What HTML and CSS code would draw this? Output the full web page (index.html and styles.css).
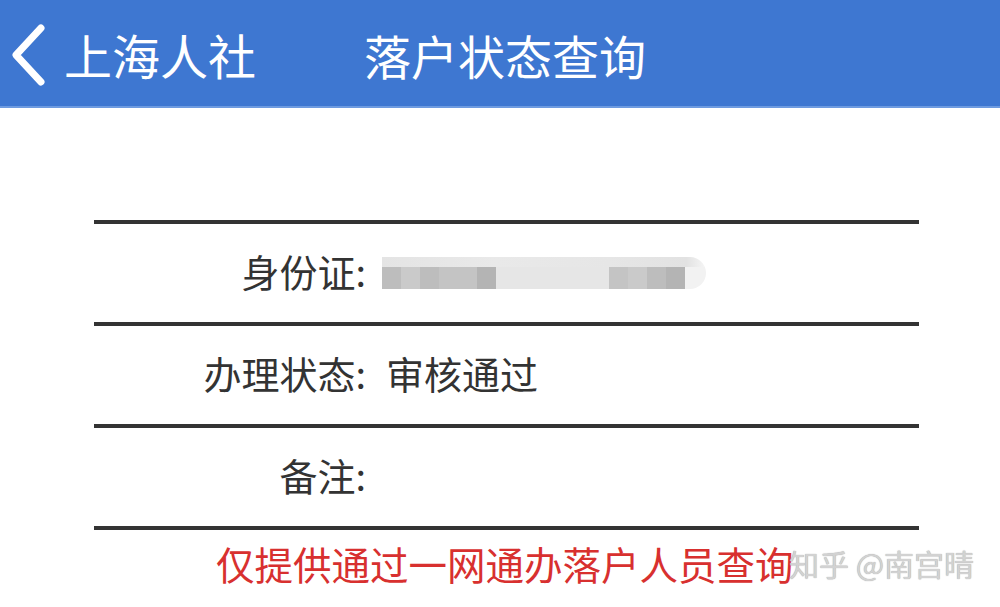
FILE: index.html
```html
<!DOCTYPE html>
<html>
<head>
  <meta charset="UTF-8">
  <title>落户状态查询</title>
  <link rel="stylesheet" href="styles.css">
</head>
<body>
  <header class="topbar">
    <a href="#" class="back">
      <svg width="40" height="64" viewBox="0 0 40 64">
        <path d="M30 5 L5 32 L30 59" fill="none" stroke="#FFFFFF" stroke-width="7" stroke-linecap="round" stroke-linejoin="round"/>
      </svg>
      <span class="back-text">上海人社</span>
    </a>
    <h1 class="title">落户状态查询</h1>
  </header>

  <div class="container">
    <div class="info">
      <div class="row">
        <span class="label">身份证:</span>
        <span class="mask">
          <span class="top"></span>
          <span class="bottom">
            <i class="s3"></i><i class="s1"></i><i class="s3"></i><i class="s2"></i><i class="s2"></i><i class="s4"></i>
            <i class="light wide"></i>
            <i class="s2"></i><i class="s1"></i><i class="s3"></i><i class="s4"></i>
          </span>
        </span>
      </div>
      <div class="row">
        <span class="label">办理状态:</span>
        <span class="value">审核通过</span>
      </div>
      <div class="row">
        <span class="label">备注:</span>
        <span class="value"></span>
      </div>
    </div>
    <p class="notice">仅提供通过一网通办落户人员查询</p>
  </div>

  <div class="watermark">知乎 @南宫晴</div>
</body>
</html>
```

FILE: styles.css
```css
body {
  margin: 0;
  font-family: "Noto Sans CJK SC", "Noto Sans", sans-serif;
  background-color: #FFFFFF;
  color: #333333;
}

.topbar {
  height: 108px;
  background-color: #3E77D1;
  display: flex;
  align-items: center;
  box-shadow: inset 0 -2px 0 #6E9BE0;
}

.back {
  display: flex;
  align-items: center;
  margin-left: 11px;
  color: #FFFFFF;
  text-decoration: none;
}

.back svg {
  display: block;
  margin-top: 2px;
}

.back-text {
  margin-left: 13px;
  font-size: 48px;
  line-height: 1;
}

.title {
  margin: 0 0 0 108px;
  font-size: 47px;
  font-weight: normal;
  line-height: 1;
  color: #FFFFFF;
}

.container {
  padding-top: 112px;
}

.info {
  margin-left: 94px;
  width: 825px;
  border-bottom: 4px solid #333333;
}

.row {
  display: flex;
  align-items: center;
  box-sizing: border-box;
  height: 102px;
  padding-bottom: 6px;
  border-top: 4px solid #333333;
  font-size: 38px;
}

.label {
  width: 272px;
  text-align: right;
}

.value {
  margin-left: 20px;
}

.mask {
  display: flex;
  flex-direction: column;
  margin-left: 16px;
  width: 324px;
  height: 32px;
  margin-top: 6px;
  border-radius: 0 16px 16px 0;
  overflow: hidden;
}

.mask .top {
  height: 10px;
  background: linear-gradient(to right, #E4E4E4 0%, #E9E9E9 35%, #E6E6E6 70%, #E2E2E2 94%, #F6F6F6 100%);
}

.mask .bottom {
  display: flex;
  height: 22px;
  background-color: #F2F2F2;
}

.mask i {
  width: 19px;
}

.mask i.wide {
  width: 113px;
}

.mask .s1 { background-color: #CACACA; }
.mask .s2 { background-color: #C4C4C4; }
.mask .s3 { background-color: #BDBDBD; }
.mask .s4 { background-color: #B4B4B4; }
.mask .light { background-color: #E6E6E6; }

.notice {
  margin: 8px 0 0 216px;
  font-size: 38.5px;
  line-height: 50px;
  color: #D8302F;
}

.watermark {
  position: absolute;
  left: 789px;
  top: 546px;
  font-size: 30px;
  line-height: 34px;
  color: #D2D2D2;
  text-shadow: 0 0 1px #999999;
}
```
